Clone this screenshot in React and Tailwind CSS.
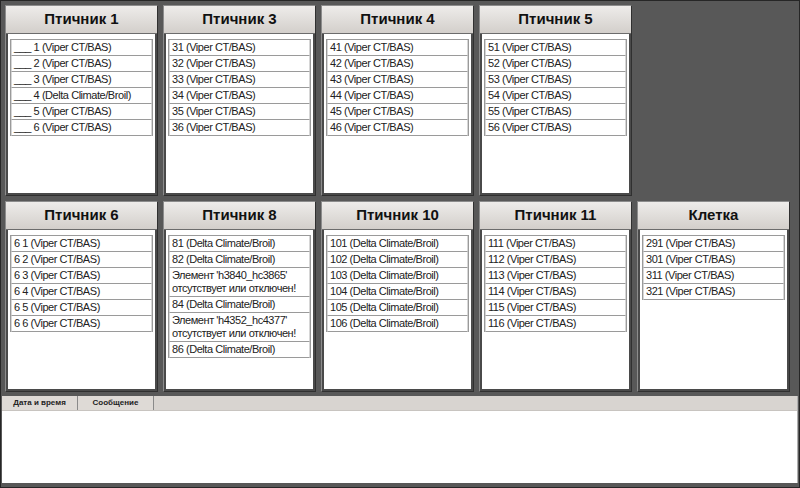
import React from 'react';

const rows = [
  [
    { title: 'Птичник 1', items: ['___ 1 (Viper CT/BAS)', '___ 2 (Viper CT/BAS)', '___ 3 (Viper CT/BAS)', '___ 4 (Delta Climate/Broil)', '___ 5 (Viper CT/BAS)', '___ 6 (Viper CT/BAS)'] },
    { title: 'Птичник 3', items: ['31 (Viper CT/BAS)', '32 (Viper CT/BAS)', '33 (Viper CT/BAS)', '34 (Viper CT/BAS)', '35 (Viper CT/BAS)', '36 (Viper CT/BAS)'] },
    { title: 'Птичник 4', items: ['41 (Viper CT/BAS)', '42 (Viper CT/BAS)', '43 (Viper CT/BAS)', '44 (Viper CT/BAS)', '45 (Viper CT/BAS)', '46 (Viper CT/BAS)'] },
    { title: 'Птичник 5', items: ['51 (Viper CT/BAS)', '52 (Viper CT/BAS)', '53 (Viper CT/BAS)', '54 (Viper CT/BAS)', '55 (Viper CT/BAS)', '56 (Viper CT/BAS)'] },
    null,
  ],
  [
    { title: 'Птичник 6', items: ['6 1 (Viper CT/BAS)', '6 2 (Viper CT/BAS)', '6 3 (Viper CT/BAS)', '6 4 (Viper CT/BAS)', '6 5 (Viper CT/BAS)', '6 6 (Viper CT/BAS)'] },
    { title: 'Птичник 8', items: ['81 (Delta Climate/Broil)', '82 (Delta Climate/Broil)', "Элемент 'h3840_hc3865' отсутствует или отключен!", '84 (Delta Climate/Broil)', "Элемент 'h4352_hc4377' отсутствует или отключен!", '86 (Delta Climate/Broil)'] },
    { title: 'Птичник 10', items: ['101 (Delta Climate/Broil)', '102 (Delta Climate/Broil)', '103 (Delta Climate/Broil)', '104 (Delta Climate/Broil)', '105 (Delta Climate/Broil)', '106 (Delta Climate/Broil)'] },
    { title: 'Птичник 11', items: ['111 (Viper CT/BAS)', '112 (Viper CT/BAS)', '113 (Viper CT/BAS)', '114 (Viper CT/BAS)', '115 (Viper CT/BAS)', '116 (Viper CT/BAS)'] },
    { title: 'Клетка', items: ['291 (Viper CT/BAS)', '301 (Viper CT/BAS)', '311 (Viper CT/BAS)', '321 (Viper CT/BAS)'] },
  ],
];

const Panel = ({ title, items }) => (
  <div className="flex flex-col w-[153px] h-full border border-t-[#8c8c8c] border-l-[#8c8c8c] border-r-[#303030] border-b-[#303030] bg-[#4a4a4a]">
    <div className="h-[28px] shrink-0 flex items-center justify-center bg-gradient-to-b from-[#eeecea] to-[#d3cfcb] border-b border-[#6c6c6c] text-[15px] font-bold text-[#111]">
      {title}
    </div>
    <div className="flex-1 bg-white ml-[2px] mr-[2px] mb-[2px] px-[2px] pt-[5px]">
      <div className="border border-[#9a9a9a] border-b-0">
        {items.map((it) => (
          <div
            key={it}
            className="border-b border-[#9a9a9a] px-[2px] py-[1px] text-[11px] leading-[13px] tracking-[-0.45px] text-[#222] border-l border-r border-l-[#d6d6d6] border-r-[#d6d6d6]"
          >
            {it}
          </div>
        ))}
      </div>
    </div>
  </div>
);

export default function App() {
  return (
    <div
      className="w-[800px] h-[488px] bg-[#585858] border border-[#262626] flex flex-col overflow-hidden"
      style={{ fontFamily: '"Liberation Sans", Arial, sans-serif' }}
    >
      <div className="flex flex-col gap-[5px] pt-[4px] px-[4px]">
        {rows.map((r, i) => (
          <div key={i} className="flex gap-[5px] h-[191px]">
            {r.map((p, j) => (p ? <Panel key={j} {...p} /> : <div key={j} className="w-[157px]" />))}
          </div>
        ))}
      </div>
      <div className="mt-[4px] mx-[1px] mb-[4px] flex-1 flex flex-col bg-white border-r border-[#b0b0b0]">
        <div className="h-[15px] flex bg-[#d8d4d0] border-b border-[#c8c4c0]">
          <div className="w-[76px] flex items-center justify-center text-[8px] font-semibold text-[#222] border-r border-[#8a8a8a] bg-[#dedad6]">
            Дата и время
          </div>
          <div className="w-[76px] flex items-center justify-center text-[8px] font-semibold text-[#222] border-r border-[#8a8a8a] bg-[#dedad6]">
            Сообщение
          </div>
        </div>
        <div className="flex-1" />
      </div>
    </div>
  );
}
